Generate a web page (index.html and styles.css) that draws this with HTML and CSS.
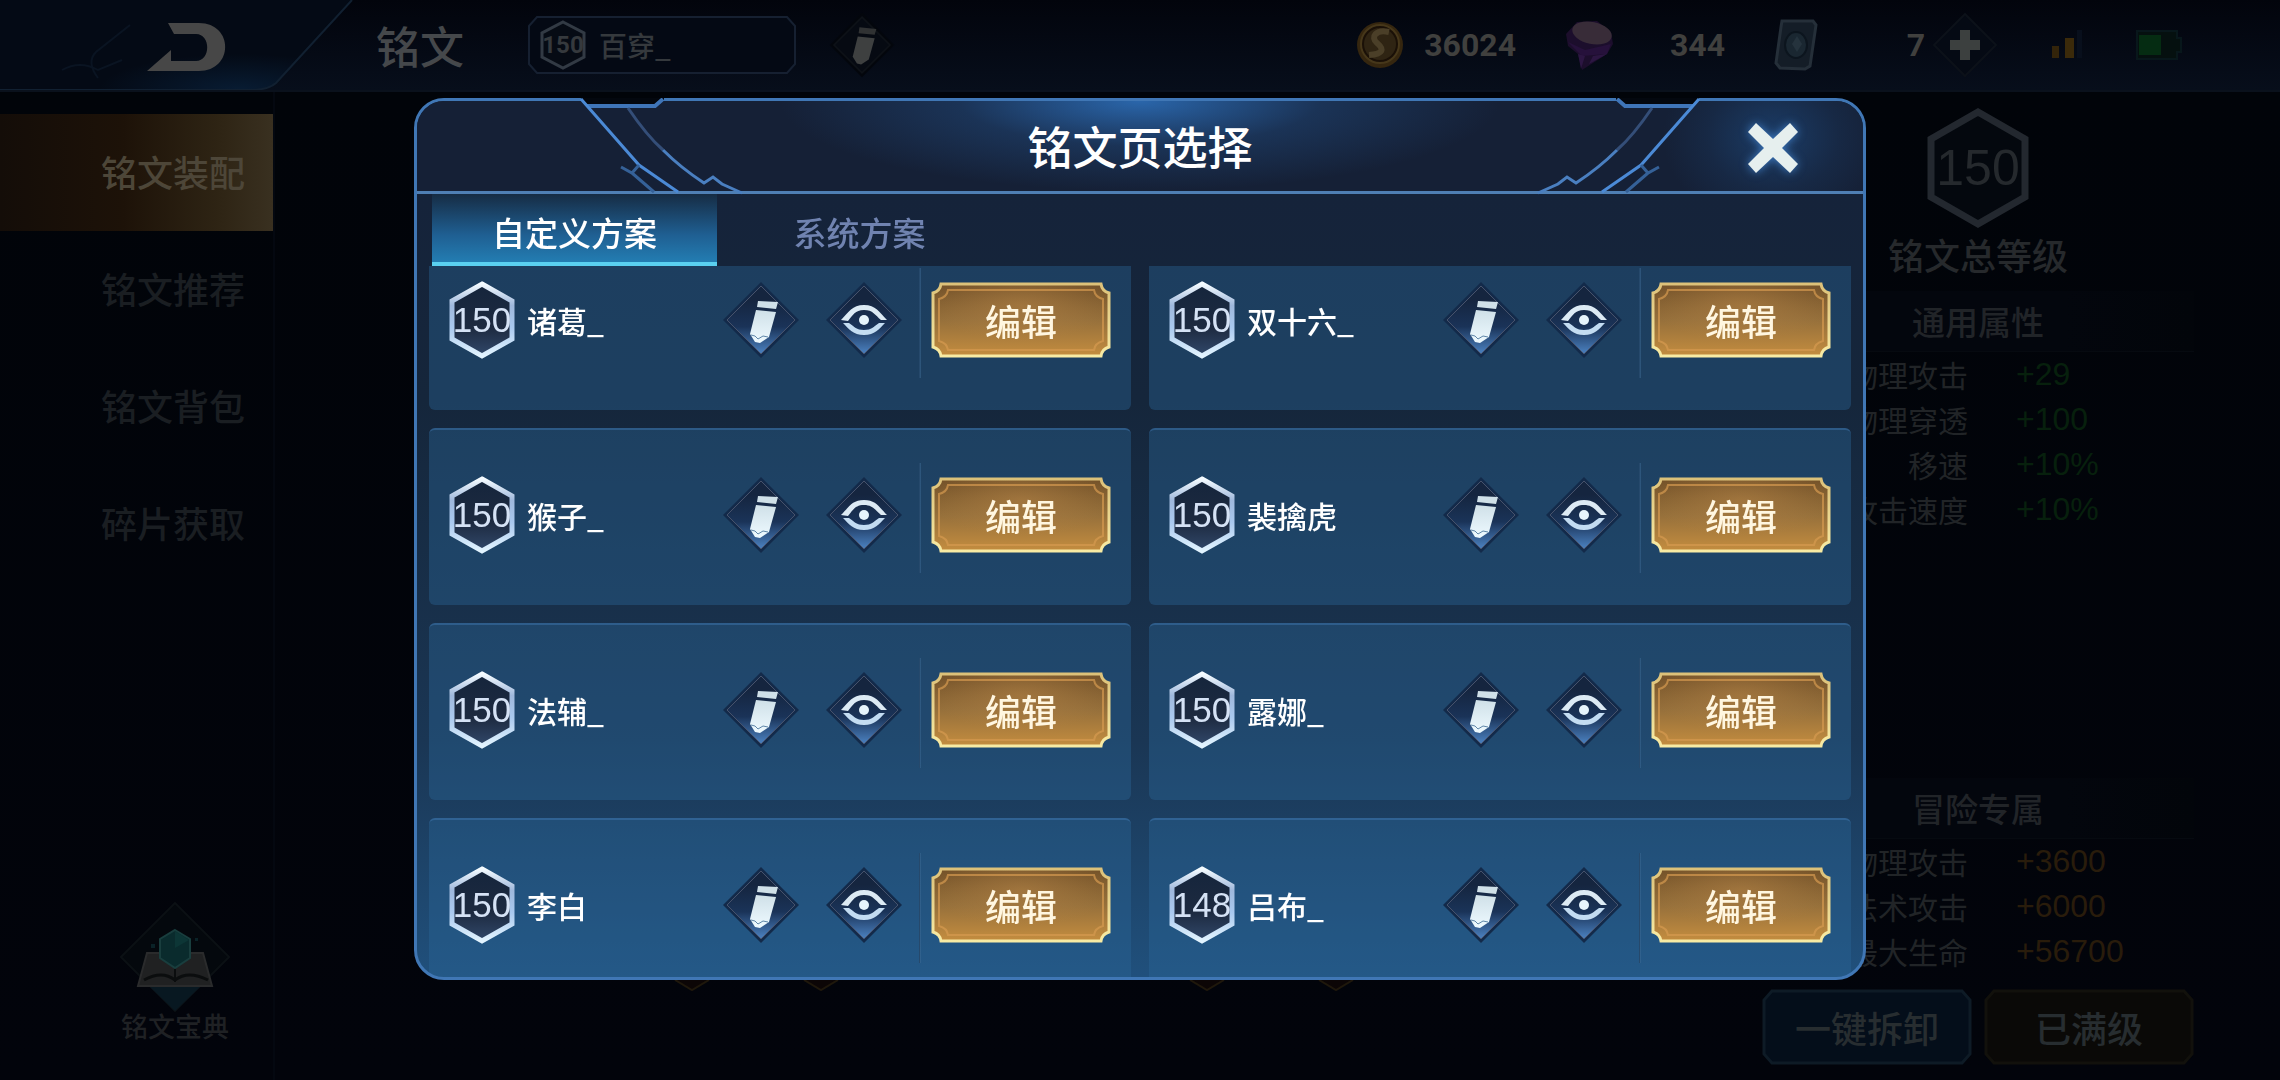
FILE: index.html
```html
<!DOCTYPE html>
<html lang="zh-CN">
<head>
  <meta charset="UTF-8">
  <title>铭文</title>
  <link rel="stylesheet" href="styles.css">
</head>
<body>
  <!-- shared icons -->
  <svg class="defs" width="0" height="0" aria-hidden="true">
    <defs>
      <linearGradient id="hexStroke" x1="0" y1="0" x2="0" y2="1">
        <stop offset="0" stop-color="#f4fbff"/>
        <stop offset="0.3" stop-color="#9fb8dc"/>
        <stop offset="0.6" stop-color="#a9c8ee"/>
        <stop offset="1" stop-color="#e2f4ff"/>
      </linearGradient>
      <linearGradient id="hexFill" x1="0" y1="0" x2="0" y2="1">
        <stop offset="0" stop-color="#15253c"/>
        <stop offset="0.6" stop-color="#1d2a40"/>
        <stop offset="1" stop-color="#31486a"/>
      </linearGradient>
      <linearGradient id="diaFill" x1="0" y1="0" x2="0" y2="1">
        <stop offset="0.2" stop-color="#15253f"/>
        <stop offset="0.6" stop-color="#1a3358"/>
        <stop offset="0.95" stop-color="#4679b5"/>
      </linearGradient>
      <linearGradient id="goldFill" x1="0" y1="0" x2="0" y2="1">
        <stop offset="0" stop-color="#745229"/>
        <stop offset="0.5" stop-color="#96703b"/>
        <stop offset="1" stop-color="#c48d3f"/>
      </linearGradient>
      <radialGradient id="goldShine" cx="0.5" cy="0.3" r="0.5">
        <stop offset="0" stop-color="#b88648" stop-opacity="0.5"/>
        <stop offset="1" stop-color="#b88648" stop-opacity="0"/>
      </radialGradient>
      <linearGradient id="goldEdge" x1="0" y1="0" x2="0" y2="1">
        <stop offset="0" stop-color="#dcc179"/>
        <stop offset="1" stop-color="#f8eba4"/>
      </linearGradient>
      <linearGradient id="whiteFade" x1="0" y1="0" x2="0" y2="1">
        <stop offset="0" stop-color="#cfe0e8"/>
        <stop offset="1" stop-color="#eefaff"/>
      </linearGradient>
    </defs>
    <symbol id="hex" viewBox="0 0 66 78">
      <path d="M33 3 63 20V58L33 75 3 58V20Z" fill="url(#hexFill)" stroke="url(#hexStroke)" stroke-width="5"/>
    </symbol>
    <symbol id="pencil" viewBox="0 0 78 78">
      <path d="M39 1 77 39 39 77 1 39Z" fill="#132a4a"/>
      <path d="M39 5 73 39 39 73 5 39Z" fill="url(#diaFill)" stroke="#47526b" stroke-width="1"/>
      <path d="M36 20 56 21 54 28 35 26Z" fill="#cfe0e8"/>
      <path d="M34 29 54 31 47 56 38 62 33 61 28 53Z" fill="url(#whiteFade)"/>
      <path d="M29 54 33 55 36 58 41 55 46 56" fill="none" stroke="#5f86a8" stroke-width="1"/>
    </symbol>
    <symbol id="eye" viewBox="0 0 78 78">
      <path d="M39 1 77 39 39 77 1 39Z" fill="#132a4a"/>
      <path d="M39 5 73 39 39 73 5 39Z" fill="url(#diaFill)" stroke="#47526b" stroke-width="1"/>
      <path d="M16 39C24 31 27 24 39 24S54 31 62 39H56C50 34 48 29 39 29S28 34 23 40Z" fill="#dceaf4"/>
      <path d="M18 42H24C30 46 31 49 39 49S48 46 54 42H60C54 48 50 54 39 54S24 48 18 42Z" fill="#c3dcf2"/>
      <circle cx="39" cy="39" r="5" fill="#e6f4fb"/>
    </symbol>
    <symbol id="goldPlate" viewBox="0 0 180 76">
      <path d="M10 2H170Q171 9 178 11V65Q171 67 170 74H10Q9 67 2 65V11Q9 9 10 2Z" fill="url(#goldFill)"/>
      <path d="M10 2H170Q171 9 178 11V65Q171 67 170 74H10Q9 67 2 65V11Q9 9 10 2Z" fill="url(#goldShine)" stroke="url(#goldEdge)" stroke-width="3"/>
      <path d="M17 8H163Q164 15 172 17V59Q164 61 163 68H17Q16 61 8 59V17Q16 15 17 8Z" fill="none" stroke="#d69a50" stroke-width="2" stroke-opacity="0.7"/>
    </symbol>
    <symbol id="headDeco" viewBox="0 0 180 98">
      <path d="M5 -1 13 8H80L89 3V-1Z" fill="#03070e"/>
      <path d="M12 8H80L88 1" fill="none" stroke="#3f75b8" stroke-width="4"/>
      <path d="M6 1 64 67 103 94" fill="none" stroke="#4b8ad6" stroke-width="3"/>
      <path d="M53 10Q72 38 88 52" fill="none" stroke="#344e78" stroke-width="3"/>
      <path d="M88 52Q106 70 129 85L138 79 147 86 167 95" fill="none" stroke="#4a7fc0" stroke-width="3"/>
      <path d="M46 69 57 75 64 67M57 75 79 94" fill="none" stroke="#356198" stroke-width="3"/>
    </symbol>
    <symbol id="slotTip" viewBox="0 0 40 12">
      <path d="M3 0 20 10 37 0" fill="#0c0606" stroke="#1f180c" stroke-width="2"/>
    </symbol>
  </svg>

  <div class="game">
    <header class="topbar">
      <button type="button" class="back" aria-label="返回">
        <svg width="355" height="90" viewBox="0 0 355 90">
          <defs>
            <radialGradient id="backGlow" cx="0.68" cy="1" r="0.4">
              <stop offset="0" stop-color="#081c33"/>
              <stop offset="1" stop-color="#081c33" stop-opacity="0"/>
            </radialGradient>
          </defs>
          <path d="M0 0H352L276 83Q268 90 250 90H0Z" fill="#040a15"/>
          <path d="M0 0H352L276 83Q268 90 250 90H0Z" fill="url(#backGlow)"/>
          <path d="M352 0 276 83Q268 90 250 90H0" fill="none" stroke="#112031" stroke-width="2"/>
          <path d="M130 25 96 52Q86 62 98 78M62 70Q80 60 98 70L122 60" fill="none" stroke="#0a1422" stroke-width="2"/>
          <path d="M168 23H199C234 23 234 71 199 71H147L171 50V61H196C211 61 211 34 196 34H174Z" fill="#474747"/>
        </svg>
      </button>
      <h1>铭文</h1>
      <button type="button" class="page-select">
        <svg class="page-select-frame" viewBox="0 0 268 58" preserveAspectRatio="none">
          <path d="M9 1H259L267 10V48L259 57H9L1 48V10Z" fill="#040914" stroke="#162031" stroke-width="2"/>
        </svg>
        <span class="hex hex-top">
          <svg viewBox="0 0 48 50"><path d="M24 2 45 13V37L24 48 3 37V13Z" fill="#060b14" stroke="#323a44" stroke-width="3"/></svg>
          <span>150</span>
        </span>
        <span class="page-select-name">百穿_</span>
      </button>
      <button type="button" class="rename" aria-label="改名">
        <svg width="66" height="66" viewBox="0 0 78 78">
          <path d="M39 1 77 39 39 77 1 39Z" fill="#03060c"/>
          <path d="M39 6 72 39 39 72 6 39Z" fill="#060a12" stroke="#0d1117" stroke-width="2"/>
          <path d="M36 18 56 20 54 27 35 25Z" fill="#303233"/>
          <path d="M34 29 54 31 47 56 38 62 33 61 28 53Z" fill="#3e4040"/>
        </svg>
      </button>

      <div class="wallet">
        <div class="coin">
          <svg width="48" height="50" viewBox="0 0 48 50">
            <circle cx="24" cy="25" r="23" fill="#35260f"/>
            <circle cx="24" cy="24" r="19" fill="#1a1007" stroke="#46371a" stroke-width="2"/>
            <circle cx="24" cy="24" r="16" fill="#2f2413"/>
            <path d="M33 12C20 9 14 17 21 23S28 34 13 35" fill="none" stroke="#4b3f28" stroke-width="6"/>
          </svg>
          <span>36024</span>
        </div>
        <div class="coin">
          <svg width="48" height="50" viewBox="0 0 48 50">
            <path d="M1 14 12 2 32 1 46 12 48 24 42 34 17 50 13 34 3 26Z" fill="#1c0e2c"/>
            <path d="M3 22 20 30 46 24 42 34 17 36Z" fill="#26113b"/>
            <path d="M13 34 20 36 16 49ZM42 34 24 44 28 36Z" fill="#2c1642"/>
            <ellipse cx="27" cy="13" rx="20" ry="11" transform="rotate(12 27 13)" fill="#382c38"/>
          </svg>
          <span>344</span>
        </div>
        <div class="coin coin-last">
          <svg width="48" height="52" viewBox="0 0 48 52">
            <path d="M8 2H39L42 6 36 47 31 50 6 49 2 44 7 8Z" fill="#141d27" stroke="#252f39" stroke-width="3"/>
            <ellipse cx="22" cy="26" rx="11" ry="13" fill="#1a2731" stroke="#0c151e" stroke-width="2"/>
            <path d="M18 25 23 17 28 25 23 33Z" fill="#25333d"/>
          </svg>
          <span>7</span>
        </div>
        <button type="button" class="add" aria-label="购买">
          <svg width="66" height="66" viewBox="0 0 66 66">
            <path d="M33 2 64 33 33 64 2 33Z" fill="#050a14" stroke="#0c1119" stroke-width="2"/>
            <path d="M28 18H38V28H48V38H38V48H28V38H18V28H28Z" fill="#3c403f"/>
          </svg>
        </button>
        <svg class="signal" width="30" height="30" viewBox="0 0 30 30">
          <path d="M0 16H7V28H0Z" fill="#33240a"/>
          <path d="M13 8H22V28H13Z" fill="#3b2a0a"/>
          <path d="M25 0H30V28H25Z" fill="#080f1c"/>
        </svg>
        <svg class="battery" width="46" height="30" viewBox="0 0 46 30">
          <path d="M1 1H41V8H45V22H41V29H1Z" fill="#05100f" stroke="#08171b" stroke-width="2"/>
          <path d="M3 5H25V25H3Z" fill="#052c12"/>
        </svg>
      </div>
    </header>

    <main class="stage">
      <nav class="sidebar">
        <a href="#" class="active">铭文装配</a>
        <a href="#">铭文推荐</a>
        <a href="#">铭文背包</a>
        <a href="#">碎片获取</a>
        <a href="#" class="codex">
          <svg width="110" height="110" viewBox="0 0 110 110">
            <path d="M55 1 109 55 55 109 1 55Z" fill="#04080d" stroke="#0b1014" stroke-width="2"/>
            <path d="M28 83H82L55 109Z" fill="#081821"/>
            <path d="M27 51H83L92 84H18Z" fill="#202122" stroke="#2a2b2c" stroke-width="2"/>
            <path d="M24 78Q42 68 55 78 68 68 88 78" fill="none" stroke="#0b0d0e" stroke-width="3"/>
            <path d="M55 66V80" stroke="#0b0d0e" stroke-width="2"/>
            <path d="M55 28 70 37V56L55 66 40 56V37Z" fill="#0a2b2d" stroke="#193e3e" stroke-width="2"/>
            <path d="M55 29 69 38 55 46Z" fill="#0d3636"/>
            <path d="M31 42H35V46H31ZM75 36H78V39H75Z" fill="#0a2227"/>
          </svg>
          <span>铭文宝典</span>
        </a>
      </nav>

      <div class="slots">
        <svg width="40" height="12"><use href="#slotTip"/></svg>
        <svg width="40" height="12"><use href="#slotTip"/></svg>
        <svg class="slot-gap" width="40" height="12"><use href="#slotTip"/></svg>
        <svg width="40" height="12"><use href="#slotTip"/></svg>
      </div>

      <aside class="summary">
        <span class="hex hex-total">
          <svg viewBox="0 0 104 122"><path d="M52 5 99 32V90L52 117 5 90V32Z" fill="#04080e" stroke="#23282f" stroke-width="7"/></svg>
          <span>150</span>
        </span>
        <p class="total-label">铭文总等级</p>

        <h2>通用属性</h2>
        <table class="stats">
          <tr><th>物理攻击</th><td>+29</td></tr>
          <tr><th>物理穿透</th><td>+100</td></tr>
          <tr><th>移速</th><td>+10%</td></tr>
          <tr><th>攻击速度</th><td>+10%</td></tr>
        </table>

        <h2 class="adventure">冒险专属</h2>
        <table class="stats stats-gold">
          <tr><th>物理攻击</th><td>+3600</td></tr>
          <tr><th>法术攻击</th><td>+6000</td></tr>
          <tr><th>最大生命</th><td>+56700</td></tr>
        </table>

        <div class="actions">
          <button type="button" class="plate">
            <svg viewBox="0 0 210 76"><path d="M10 2H200L208 11V65L200 74H10L2 65V11Z" fill="#040e1a" stroke="#0e1b26" stroke-width="3"/></svg>
            <span>一键拆卸</span>
          </button>
          <button type="button" class="plate">
            <svg viewBox="0 0 210 76"><path d="M10 2H200L208 11V65L200 74H10L2 65V11Z" fill="#0a0907" stroke="#12110c" stroke-width="3"/></svg>
            <span>已满级</span>
          </button>
        </div>
      </aside>
    </main>
  </div>

  <div class="overlay">
    <section class="modal" role="dialog" aria-labelledby="modalTitle">
      <header class="modal-header">
        <svg class="deco deco-left" width="180" height="98"><use href="#headDeco"/></svg>
        <svg class="deco deco-right" width="180" height="98"><use href="#headDeco"/></svg>
        <h2 id="modalTitle">铭文页选择</h2>
        <button type="button" class="close" aria-label="关闭">
          <svg width="52" height="52" viewBox="0 0 52 52">
            <path d="M9 1 26 17 43 1 51 10 35 26 51 42 43 51 26 35 9 51 1 42 17 26 1 10Z" fill="#e6efee"/>
          </svg>
        </button>
      </header>

      <nav class="tabs">
        <button type="button" class="active">自定义方案</button>
        <button type="button">系统方案</button>
      </nav>

      <div class="list-view">
        <ul class="plans">
          <li class="plan">
            <span class="hex"><svg><use href="#hex"/></svg><span>150</span></span>
            <span class="name">诸葛_</span>
            <button type="button" class="icon-btn" aria-label="改名"><svg><use href="#pencil"/></svg></button>
            <button type="button" class="icon-btn" aria-label="查看"><svg><use href="#eye"/></svg></button>
            <button type="button" class="edit"><svg><use href="#goldPlate"/></svg><span>编辑</span></button>
          </li>
          <li class="plan">
            <span class="hex"><svg><use href="#hex"/></svg><span>150</span></span>
            <span class="name">双十六_</span>
            <button type="button" class="icon-btn" aria-label="改名"><svg><use href="#pencil"/></svg></button>
            <button type="button" class="icon-btn" aria-label="查看"><svg><use href="#eye"/></svg></button>
            <button type="button" class="edit"><svg><use href="#goldPlate"/></svg><span>编辑</span></button>
          </li>
          <li class="plan">
            <span class="hex"><svg><use href="#hex"/></svg><span>150</span></span>
            <span class="name">猴子_</span>
            <button type="button" class="icon-btn" aria-label="改名"><svg><use href="#pencil"/></svg></button>
            <button type="button" class="icon-btn" aria-label="查看"><svg><use href="#eye"/></svg></button>
            <button type="button" class="edit"><svg><use href="#goldPlate"/></svg><span>编辑</span></button>
          </li>
          <li class="plan">
            <span class="hex"><svg><use href="#hex"/></svg><span>150</span></span>
            <span class="name">裴擒虎</span>
            <button type="button" class="icon-btn" aria-label="改名"><svg><use href="#pencil"/></svg></button>
            <button type="button" class="icon-btn" aria-label="查看"><svg><use href="#eye"/></svg></button>
            <button type="button" class="edit"><svg><use href="#goldPlate"/></svg><span>编辑</span></button>
          </li>
          <li class="plan">
            <span class="hex"><svg><use href="#hex"/></svg><span>150</span></span>
            <span class="name">法辅_</span>
            <button type="button" class="icon-btn" aria-label="改名"><svg><use href="#pencil"/></svg></button>
            <button type="button" class="icon-btn" aria-label="查看"><svg><use href="#eye"/></svg></button>
            <button type="button" class="edit"><svg><use href="#goldPlate"/></svg><span>编辑</span></button>
          </li>
          <li class="plan">
            <span class="hex"><svg><use href="#hex"/></svg><span>150</span></span>
            <span class="name">露娜_</span>
            <button type="button" class="icon-btn" aria-label="改名"><svg><use href="#pencil"/></svg></button>
            <button type="button" class="icon-btn" aria-label="查看"><svg><use href="#eye"/></svg></button>
            <button type="button" class="edit"><svg><use href="#goldPlate"/></svg><span>编辑</span></button>
          </li>
          <li class="plan">
            <span class="hex"><svg><use href="#hex"/></svg><span>150</span></span>
            <span class="name">李白</span>
            <button type="button" class="icon-btn" aria-label="改名"><svg><use href="#pencil"/></svg></button>
            <button type="button" class="icon-btn" aria-label="查看"><svg><use href="#eye"/></svg></button>
            <button type="button" class="edit"><svg><use href="#goldPlate"/></svg><span>编辑</span></button>
          </li>
          <li class="plan">
            <span class="hex"><svg><use href="#hex"/></svg><span>148</span></span>
            <span class="name">吕布_</span>
            <button type="button" class="icon-btn" aria-label="改名"><svg><use href="#pencil"/></svg></button>
            <button type="button" class="icon-btn" aria-label="查看"><svg><use href="#eye"/></svg></button>
            <button type="button" class="edit"><svg><use href="#goldPlate"/></svg><span>编辑</span></button>
          </li>
        </ul>
      </div>
    </section>
  </div>
</body>
</html>
```
FILE: styles.css
```css
* {
  margin: 0;
  padding: 0;
  box-sizing: border-box;
}

body {
  background-color: #02050a;
  color: #fff;
  font-family: "Noto Sans CJK SC", sans-serif;
  overflow: hidden;
}

button {
  background: none;
  border: none;
  color: inherit;
  font-family: inherit;
  cursor: pointer;
}

a {
  color: inherit;
  text-decoration: none;
}

svg {
  display: block;
}

.defs {
  position: absolute;
}

.game {
  display: flex;
  flex-direction: column;
  height: 100vh;
}

/* top bar */
.topbar {
  display: flex;
  align-items: center;
  height: 92px;
  padding-right: 98px;
  background: linear-gradient(#02040c, #070e1b);
  border-bottom: 2px solid #0a111c;
}

.topbar h1 {
  margin-left: 21px;
  width: 88px;
  font-size: 44px;
  line-height: 60px;
  font-weight: 500;
  color: #45484b;
}

.page-select {
  position: relative;
  display: flex;
  align-items: center;
  width: 268px;
  height: 58px;
  margin-left: 64px;
  padding-left: 11px;
  color: #35393d;
}

.page-select-frame {
  position: absolute;
  inset: 0;
  width: 100%;
  height: 100%;
}

.page-select-name {
  position: relative;
  margin-left: 12px;
  font-size: 28px;
  line-height: 40px;
  font-weight: 500;
}

.rename {
  margin-left: 33px;
}

.wallet {
  display: flex;
  align-items: center;
  margin-left: auto;
}

.coin {
  display: flex;
  align-items: center;
  justify-content: space-between;
  width: 160px;
  margin-right: 49px;
  font-family: Roboto, sans-serif;
  font-size: 32px;
  font-weight: 700;
  color: #40403e;
}

.coin-last {
  width: 151px;
  margin-right: 7px;
}

.signal,
.battery {
  margin-left: 54px;
}

/* hexagon with the level number */
.hex {
  display: grid;
  place-items: center;
  flex: none;
  width: 66px;
  height: 78px;
  font-family: "Liberation Sans", sans-serif;
  font-size: 35px;
  color: #d5e2f5;
}

.hex > * {
  grid-area: 1 / 1;
}

.hex svg {
  width: 100%;
  height: 100%;
}

.hex-top {
  position: relative;
  width: 48px;
  height: 50px;
  font-family: Roboto, sans-serif;
  font-size: 24px;
  font-weight: 700;
  color: #35393d;
}

.hex-total {
  width: 104px;
  height: 122px;
  font-size: 50px;
  color: #25292d;
}

/* page behind the dialog */
.stage {
  flex: 1;
  display: flex;
  background: linear-gradient(#010409, #02040b);
}

.sidebar {
  display: flex;
  flex-direction: column;
  width: 275px;
  padding: 22px 0 38px;
  border-right: 2px solid #040810;
  font-size: 36px;
  font-weight: 500;
  color: #1a1e22;
}

.sidebar a {
  height: 117px;
  padding-right: 28px;
  line-height: 115px;
  text-align: right;
}

.sidebar .active {
  background: linear-gradient(90deg, #140d08, #1d1208 45%, #2e2414 80%, #393020);
  color: #4d4638;
}

.sidebar .codex {
  display: flex;
  flex-direction: column;
  align-items: center;
  height: auto;
  margin-top: auto;
  padding: 0 0 0 77px;
  font-size: 27px;
  line-height: 32px;
  color: #1f2124;
}

.sidebar .codex svg {
  margin-bottom: -2px;
}

.slots {
  display: flex;
  align-items: flex-end;
  gap: 89px;
  margin-left: 397px;
  padding-bottom: 88px;
}

.slot-gap {
  margin-left: 257px;
}

.summary {
  display: flex;
  flex-direction: column;
  align-items: center;
  width: 432px;
  margin-left: auto;
  margin-right: 86px;
  padding: 15px 0;
}

.total-label {
  margin-top: -2px;
  font-size: 36px;
  line-height: 54px;
  font-weight: 500;
  color: #26292c;
}

.summary h2 {
  width: 100%;
  margin-top: 10px;
  font-size: 33px;
  line-height: 60px;
  font-weight: 500;
  text-align: center;
  color: #212428;
  background: linear-gradient(90deg, #03060d 70%, #02050a);
  border-bottom: 1px solid #060a10;
}

.summary .adventure {
  margin-top: auto;
}

.stats {
  width: 100%;
  border-collapse: collapse;
}

.stats th {
  width: 206px;
  font-size: 30px;
  line-height: 45px;
  font-weight: 400;
  text-align: right;
  color: #212427;
}

.stats td {
  padding-left: 48px;
  font-family: "Liberation Sans", sans-serif;
  font-size: 32px;
  line-height: 45px;
  color: #07200d;
}

.stats-gold td {
  color: #291c0b;
}

.actions {
  display: flex;
  gap: 12px;
  margin-top: 15px;
}

.plate {
  display: grid;
  place-items: center;
  width: 210px;
  height: 76px;
  font-size: 36px;
  font-weight: 500;
  color: #272d30;
}

.plate > *,
.edit > * {
  grid-area: 1 / 1;
}

.plate svg {
  width: 100%;
  height: 100%;
}

/* dialog */
.overlay {
  position: fixed;
  inset: 0;
  display: flex;
  padding: 98px 414px 100px;
}

.modal {
  flex: 1;
  display: flex;
  flex-direction: column;
  min-width: 0;
  background: linear-gradient(#15233a 95px, #15263b 300px, #1a3654 640px, #20507c);
  border: 3px solid #4077b5;
  border-radius: 30px;
}

.modal-header {
  position: relative;
  display: flex;
  align-items: center;
  justify-content: center;
  height: 93px;
  border-bottom: 3px solid #4f7fb4;
  border-radius: 27px 27px 0 0;
  background:
    radial-gradient(ellipse 110px 90px at calc(100% - 90px) 36px, #1b3c66, rgba(27, 60, 102, 0.3) 60%, transparent),
    radial-gradient(ellipse 360px 90px at 50% 0, #2a66ab, rgba(35, 80, 135, 0.4) 50%, transparent),
    #152036;
}

.modal-header h2 {
  font-size: 45px;
  line-height: 66px;
  font-weight: 500;
}

.deco {
  position: absolute;
  top: -3px;
}

.deco-left {
  left: 158px;
}

.deco-right {
  right: 158px;
  transform: scaleX(-1);
}

.close {
  position: absolute;
  top: 21px;
  right: 64px;
  filter: drop-shadow(0 0 5px #3f7cc4);
}

.tabs {
  display: flex;
  padding-left: 15px;
}

.tabs button {
  width: 285px;
  height: 72px;
  padding-top: 8px;
  border-bottom: 4px solid transparent;
  font-size: 33px;
  font-weight: 500;
  color: #7083b0;
}

.tabs .active {
  background: linear-gradient(#162c44, #1f5f92 60%, #237db2);
  border-bottom-color: #5ad0f0;
  color: #fff;
}

.list-view {
  flex: 1;
  min-height: 0;
  padding: 0 12px;
  overflow: hidden;
  border-radius: 0 0 27px 27px;
}

/* list is scrolled down a little */
.plans {
  display: grid;
  grid-template-columns: 1fr 1fr;
  gap: 18px;
  margin-top: -33px;
  list-style: none;
}

.plan {
  display: flex;
  align-items: center;
  height: 177px;
  padding: 0 20px 5px;
  background: linear-gradient(90deg, transparent 490px, #0f2844 490px, #3d6a94 491px, transparent 492px) center / 100% 110px no-repeat, rgba(43, 103, 152, 0.4);
  border-top: 2px solid rgba(70, 130, 190, 0.4);
  border-radius: 6px;
}

.name {
  flex: 1;
  margin-left: 12px;
  font-size: 30px;
  font-weight: 500;
}

.icon-btn {
  margin-right: 25px;
}

.icon-btn svg {
  width: 78px;
  height: 78px;
}

.edit {
  display: grid;
  place-items: center;
  margin-left: 3px;
  font-size: 36px;
  line-height: 50px;
  font-weight: 500;
  color: #fff6e0;
}

.edit svg {
  width: 180px;
  height: 76px;
}
```
